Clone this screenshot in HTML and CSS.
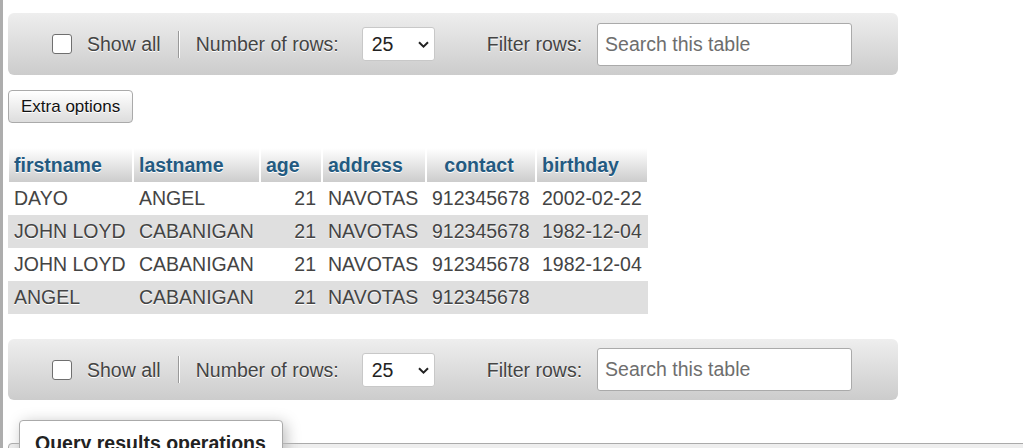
FILE: index.html
```html
<!DOCTYPE html>
<html>
<head>
<meta charset="utf-8">
<link rel="stylesheet" href="styles.css">
</head>
<body>
<div class="page">
  <div class="resizer"></div>
  <main class="main">
    <div class="navbar">
      <input type="checkbox" class="cb">
      <span class="lbl show-all">Show all</span>
      <span class="sep"></span>
      <span class="lbl">Number of rows:</span>
      <span class="select-wrap">
        <select class="sel"><option>25</option></select>
        <svg class="chev" width="11" height="7" viewBox="0 0 11 7"><path d="M1 1.2 L5.5 5.6 L10 1.2" fill="none" stroke="#222" stroke-width="2"/></svg>
      </span>
      <span class="lbl filter">Filter rows:</span>
      <input type="text" class="search" placeholder="Search this table">
    </div>

    <button class="btn">Extra options</button>

    <table class="data">
      <colgroup>
        <col style="width:125px"><col style="width:127px"><col style="width:62px"><col style="width:104px"><col style="width:110px"><col style="width:112px">
      </colgroup>
      <thead>
        <tr><th>firstname</th><th>lastname</th><th>age</th><th>address</th><th class="c">contact</th><th>birthday</th></tr>
      </thead>
      <tbody>
        <tr><td>DAYO</td><td>ANGEL</td><td class="r">21</td><td>NAVOTAS</td><td>912345678</td><td>2002-02-22</td></tr>
        <tr><td>JOHN LOYD</td><td>CABANIGAN</td><td class="r">21</td><td>NAVOTAS</td><td>912345678</td><td>1982-12-04</td></tr>
        <tr><td>JOHN LOYD</td><td>CABANIGAN</td><td class="r">21</td><td>NAVOTAS</td><td>912345678</td><td>1982-12-04</td></tr>
        <tr><td>ANGEL</td><td>CABANIGAN</td><td class="r">21</td><td>NAVOTAS</td><td>912345678</td><td></td></tr>
      </tbody>
    </table>

    <div class="navbar nav2">
      <input type="checkbox" class="cb">
      <span class="lbl show-all">Show all</span>
      <span class="sep"></span>
      <span class="lbl">Number of rows:</span>
      <span class="select-wrap">
        <select class="sel"><option>25</option></select>
        <svg class="chev" width="11" height="7" viewBox="0 0 11 7"><path d="M1 1.2 L5.5 5.6 L10 1.2" fill="none" stroke="#222" stroke-width="2"/></svg>
      </span>
      <span class="lbl filter">Filter rows:</span>
      <input type="text" class="search" placeholder="Search this table">
    </div>

    <fieldset class="ops">
      <legend class="ops-legend">Query results operations</legend>
    </fieldset>
  </main>
</div>
</body>
</html>
```

FILE: styles.css
```css
html, body {
  margin: 0;
  padding: 0;
  overflow: hidden;
  height: 448px;
  background: #fff;
}
body {
  font-family: "Liberation Sans", Arial, sans-serif;
  font-size: 19.5px;
  color: #444;
  text-shadow: 0 1px 0 #fff;
}
.page {
  display: flex;
  height: 448px;
}
.resizer {
  width: 3px;
  flex: none;
  background: #adadad;
}
.main {
  flex: 1;
  padding: 13px 0 0 5px;
  min-width: 0;
}
.navbar {
  width: 890px;
  height: 62px;
  box-sizing: border-box;
  border-radius: 6px;
  background: linear-gradient(#eee, #ccc);
  display: flex;
  align-items: center;
  padding-left: 44px;
}
.nav2 {
  margin-top: 25px;
  height: 61px;
}
.cb {
  appearance: none;
  -webkit-appearance: none;
  margin: 0;
  width: 20px;
  height: 20px;
  box-sizing: border-box;
  border: 1.5px solid #6f6f6f;
  border-radius: 3px;
  background: #fff;
}
.lbl {
  color: #444;
  line-height: 24px;
}
.show-all {
  margin-left: 15px;
}
.sep {
  height: 27px;
  border-left: 1px solid #999;
  border-right: 1px solid #fff;
  margin: 0 16px 0 17px;
  box-sizing: content-box;
  width: 0;
}
.select-wrap {
  position: relative;
  margin-left: 23px;
  display: inline-block;
  height: 34px;
}
.sel {
  appearance: none;
  -webkit-appearance: none;
  width: 73px;
  height: 34px;
  box-sizing: border-box;
  border: 1px solid #c8c8c8;
  border-radius: 3px;
  background: #fff;
  font-family: "Liberation Sans", Arial, sans-serif;
  font-size: 19.5px;
  color: #222;
  padding: 0 0 0 9px;
  margin: 0;
}
.chev {
  position: absolute;
  left: 56px;
  top: 14px;
}
.filter {
  margin-left: 52px;
}
.search {
  margin: 0 0 0 15px;
  width: 255px;
  height: 43px;
  box-sizing: border-box;
  border: 1px solid #aaa;
  border-radius: 3px;
  background: #fff;
  font-family: "Liberation Sans", Arial, sans-serif;
  font-size: 19.5px;
  padding: 0 0 0 7px;
  color: #333;
}
.search::placeholder {
  color: #6e6e6e;
}
.btn {
  display: block;
  margin: 15px 0 0 0;
  width: 125px;
  height: 33px;
  box-sizing: border-box;
  border: 1px solid #aaa;
  border-radius: 4px;
  background: linear-gradient(#fff, #ddd);
  font-family: "Liberation Sans", Arial, sans-serif;
  font-size: 17px;
  color: #111;
  text-shadow: 0 1px 0 #fff;
  padding: 0 0 0 12px;
  text-align: left;
}
.data {
  margin-top: 25px;
  border-collapse: separate;
  border-spacing: 0;
  table-layout: fixed;
  width: 640px;
}
.data th {
  height: 34px;
  box-sizing: border-box;
  padding: 0 5px;
  text-align: left;
  font-weight: bold;
  color: #235a81;
  background: linear-gradient(#fff, #ccc);
  border-left: 1px solid #fff;
  border-right: 1px solid #fff;
  white-space: nowrap;
  overflow: hidden;
}
.data th.c {
  text-align: center;
  padding-right: 9px;
}
.data td {
  height: 33px;
  box-sizing: border-box;
  padding: 0 6px;
  white-space: nowrap;
  color: #444;
  overflow: hidden;
}
.data td.r {
  text-align: right;
}
.data tbody tr:nth-child(even) td {
  background: #dfdfdf;
}
.ops {
  margin: 20px 0 0 0;
  width: 1100px;
  box-sizing: border-box;
  border: 1px solid #aaa;
  border-radius: 4px 4px 0 0;
  background: #eee;
  padding: 0 10px 40px 10px;
  min-inline-size: auto;
}
.ops-legend {
  background: #fff;
  border: 1px solid #aaa;
  border-radius: 4px 4px 0 0;
  box-shadow: 3px 3px 15px #bbb;
  padding: 8px 16px 8px 15px;
  line-height: 28px;
  font-weight: bold;
  color: #222;
}
```
